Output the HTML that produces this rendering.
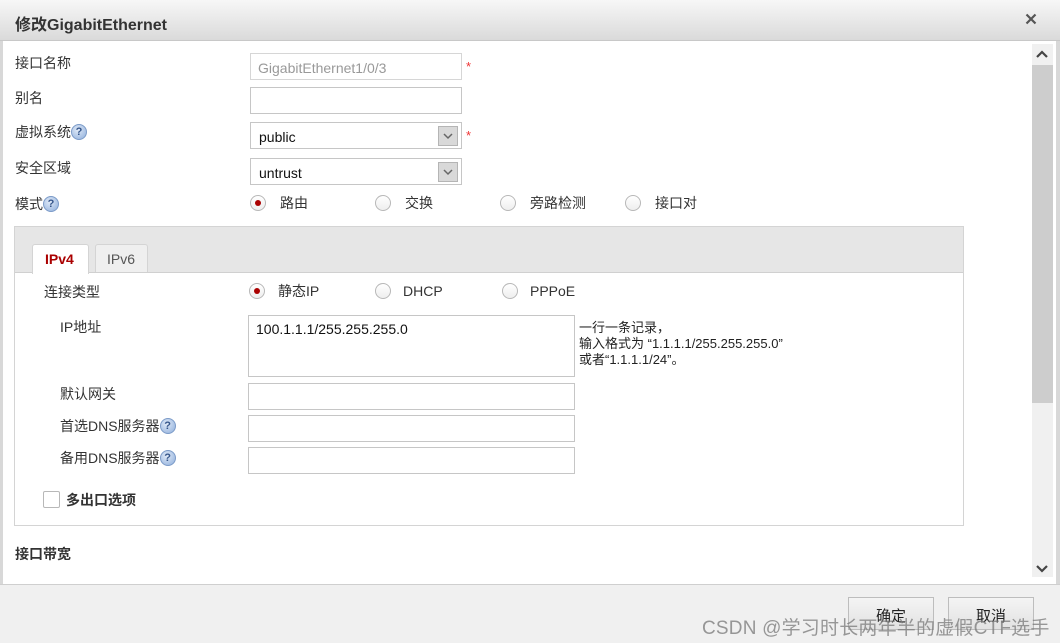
<!DOCTYPE html>
<html><head><meta charset="utf-8"><style>
*{margin:0;padding:0;box-sizing:border-box}
body{width:1060px;height:643px;position:relative;overflow:hidden;background:#fff;font-family:"Liberation Sans","Noto Sans CJK SC",sans-serif;font-size:14px;color:#333}
.a{position:absolute}
.title{left:0;top:0;width:1060px;height:41px;background:linear-gradient(#f7f7f7,#dadada);border-bottom:1px solid #c8c8c8}
.title span{position:absolute;left:15px;top:11px;font-weight:bold;font-size:16px;color:#333}
.lbl{font-size:14px;color:#333;line-height:18px}
.inp{border:1px solid #c6c6c6;background:#fff;height:27px}
.sel .btn{position:absolute;right:3px;top:3px;width:20px;height:20px;background:#d9d9d9;border:1px solid #b5b5b5}
.q{display:inline-block;width:16px;height:16px;border-radius:50%;background:radial-gradient(circle at 40% 35%,#dfe9f7,#8eaedb);border:1px solid #7c9bc8;color:#35558a;font-size:11px;font-weight:bold;text-align:center;line-height:14px;vertical-align:top;margin-top:1px}
.r{width:16px;height:16px;border-radius:50%;border:1px solid #b8b8b8;background:linear-gradient(#fff,#eee)}
.r.on::after{content:"";position:absolute;left:4px;top:4px;width:6px;height:6px;border-radius:50%;background:#a00}
.star{color:#e33;font-size:13px}
</style></head><body>
<div class="a title"><span>修改GigabitEthernet</span><svg class="a" style="left:1025px;top:13px" width="12" height="12"><path d="M1.5 1.5l9 9M10.5 1.5l-9 9" stroke="#555" stroke-width="2.2"/></svg></div>
<div class="a" style="left:0;top:41px;width:3px;height:543px;background:#d8d8d8"></div>
<div class="a" style="right:0;top:41px;width:4px;height:543px;background:#d8d8d8"></div>

<div class="a lbl" style="left:15px;top:54px">接口名称</div>
<div class="a inp" style="left:250px;top:53px;width:212px;color:#999;padding:6px 7px;font-size:14px;border-color:#d6d6d6">GigabitEthernet1/0/3</div>
<div class="a star" style="left:466px;top:59px">*</div>
<div class="a lbl" style="left:15px;top:89px">别名</div>
<div class="a inp" style="left:250px;top:87px;width:212px"></div>
<div class="a lbl" style="left:15px;top:123px">虚拟系统<span class="q">?</span></div>
<div class="a inp sel" style="left:250px;top:122px;width:212px;padding:6px 8px;color:#111">public<div class="btn"><svg width="18" height="18"><path d="M5 7l4 4 4-4" stroke="#666" stroke-width="1.5" fill="none"/></svg></div></div>
<div class="a star" style="left:466px;top:128px">*</div>
<div class="a lbl" style="left:15px;top:159px">安全区域</div>
<div class="a inp sel" style="left:250px;top:158px;width:212px;padding:6px 8px;color:#111">untrust<div class="btn"><svg width="18" height="18"><path d="M5 7l4 4 4-4" stroke="#666" stroke-width="1.5" fill="none"/></svg></div></div>
<div class="a lbl" style="left:15px;top:195px">模式<span class="q">?</span></div>
<div class="a r on" style="left:250px;top:195px"></div><div class="a lbl" style="left:280px;top:194px">路由</div>
<div class="a r" style="left:375px;top:195px"></div><div class="a lbl" style="left:405px;top:194px">交换</div>
<div class="a r" style="left:500px;top:195px"></div><div class="a lbl" style="left:530px;top:194px">旁路检测</div>
<div class="a r" style="left:625px;top:195px"></div><div class="a lbl" style="left:655px;top:194px">接口对</div>

<div class="a" style="left:14px;top:226px;width:950px;height:300px;border:1px solid #d4d4d4;background:#fff"></div>
<div class="a" style="left:15px;top:227px;width:948px;height:46px;background:#e6e6e6;border-bottom:1px solid #d0d0d0"></div>
<div class="a" style="left:32px;top:244px;width:57px;height:30px;background:#fff;border:1px solid #d4d4d4;border-bottom:none;border-radius:3px 3px 0 0;color:#a00;font-weight:bold;padding:6px 0 0 12px">IPv4</div>
<div class="a" style="left:95px;top:244px;width:53px;height:28px;background:#efefef;border:1px solid #d4d4d4;border-bottom:none;border-radius:3px 3px 0 0;color:#555;padding:6px 0 0 11px">IPv6</div>

<div class="a lbl" style="left:44px;top:283px">连接类型</div>
<div class="a r on" style="left:249px;top:283px"></div><div class="a lbl" style="left:278px;top:282px">静态IP</div>
<div class="a r" style="left:375px;top:283px"></div><div class="a lbl" style="left:403px;top:282px">DHCP</div>
<div class="a r" style="left:502px;top:283px"></div><div class="a lbl" style="left:530px;top:282px">PPPoE</div>
<div class="a lbl" style="left:60px;top:318px">IP地址</div>
<div class="a inp" style="left:248px;top:315px;width:327px;height:62px;padding:5px 7px;color:#111">100.1.1.1/255.255.255.0</div>
<div class="a lbl" style="left:579px;top:320px;font-size:13px;line-height:16px;color:#222">一行一条记录，<br>输入格式为 “1.1.1.1/255.255.255.0”<br>或者“1.1.1.1/24”。</div>
<div class="a lbl" style="left:60px;top:385px">默认网关</div>
<div class="a inp" style="left:248px;top:383px;width:327px"></div>
<div class="a lbl" style="left:60px;top:417px">首选DNS服务器<span class="q">?</span></div>
<div class="a inp" style="left:248px;top:415px;width:327px"></div>
<div class="a lbl" style="left:60px;top:449px">备用DNS服务器<span class="q">?</span></div>
<div class="a inp" style="left:248px;top:447px;width:327px"></div>
<div class="a" style="left:43px;top:491px;width:17px;height:17px;border:1px solid #b8b8b8;border-radius:2px"></div>
<div class="a lbl" style="left:66px;top:491px;font-weight:bold">多出口选项</div>
<div class="a lbl" style="left:15px;top:545px;font-weight:bold">接口带宽</div>

<div class="a" style="left:1032px;top:44px;width:21px;height:533px;background:#f0f0f0"></div>
<div class="a" style="left:1032px;top:65px;width:21px;height:338px;background:#cdcdcd"></div>
<svg class="a" style="left:1034px;top:47px" width="16" height="14"><path d="M3 10l5-5 5 5" stroke="#444" stroke-width="2.2" fill="none"/></svg>
<svg class="a" style="left:1034px;top:561px" width="16" height="14"><path d="M3 5l5 5 5-5" stroke="#444" stroke-width="2.2" fill="none"/></svg>

<div class="a" style="left:0;top:584px;width:1060px;height:59px;background:#f0f0f0;border-top:1px solid #cfcfcf"></div>
<div class="a" style="left:848px;top:597px;width:86px;height:33px;border:1px solid #bdbdbd;background:linear-gradient(#f4f4f4,#e2e2e2);text-align:center;padding-top:7px;color:#222;font-size:15px">确定</div>
<div class="a" style="left:948px;top:597px;width:86px;height:33px;border:1px solid #bdbdbd;background:linear-gradient(#f4f4f4,#e2e2e2);text-align:center;padding-top:7px;color:#222;font-size:15px">取消</div>
<div class="a" style="left:702px;top:613px;font-size:19px;color:rgba(120,120,120,0.75);letter-spacing:0.2px">CSDN @学习时长两年半的虚假CTF选手</div>
</body></html>
